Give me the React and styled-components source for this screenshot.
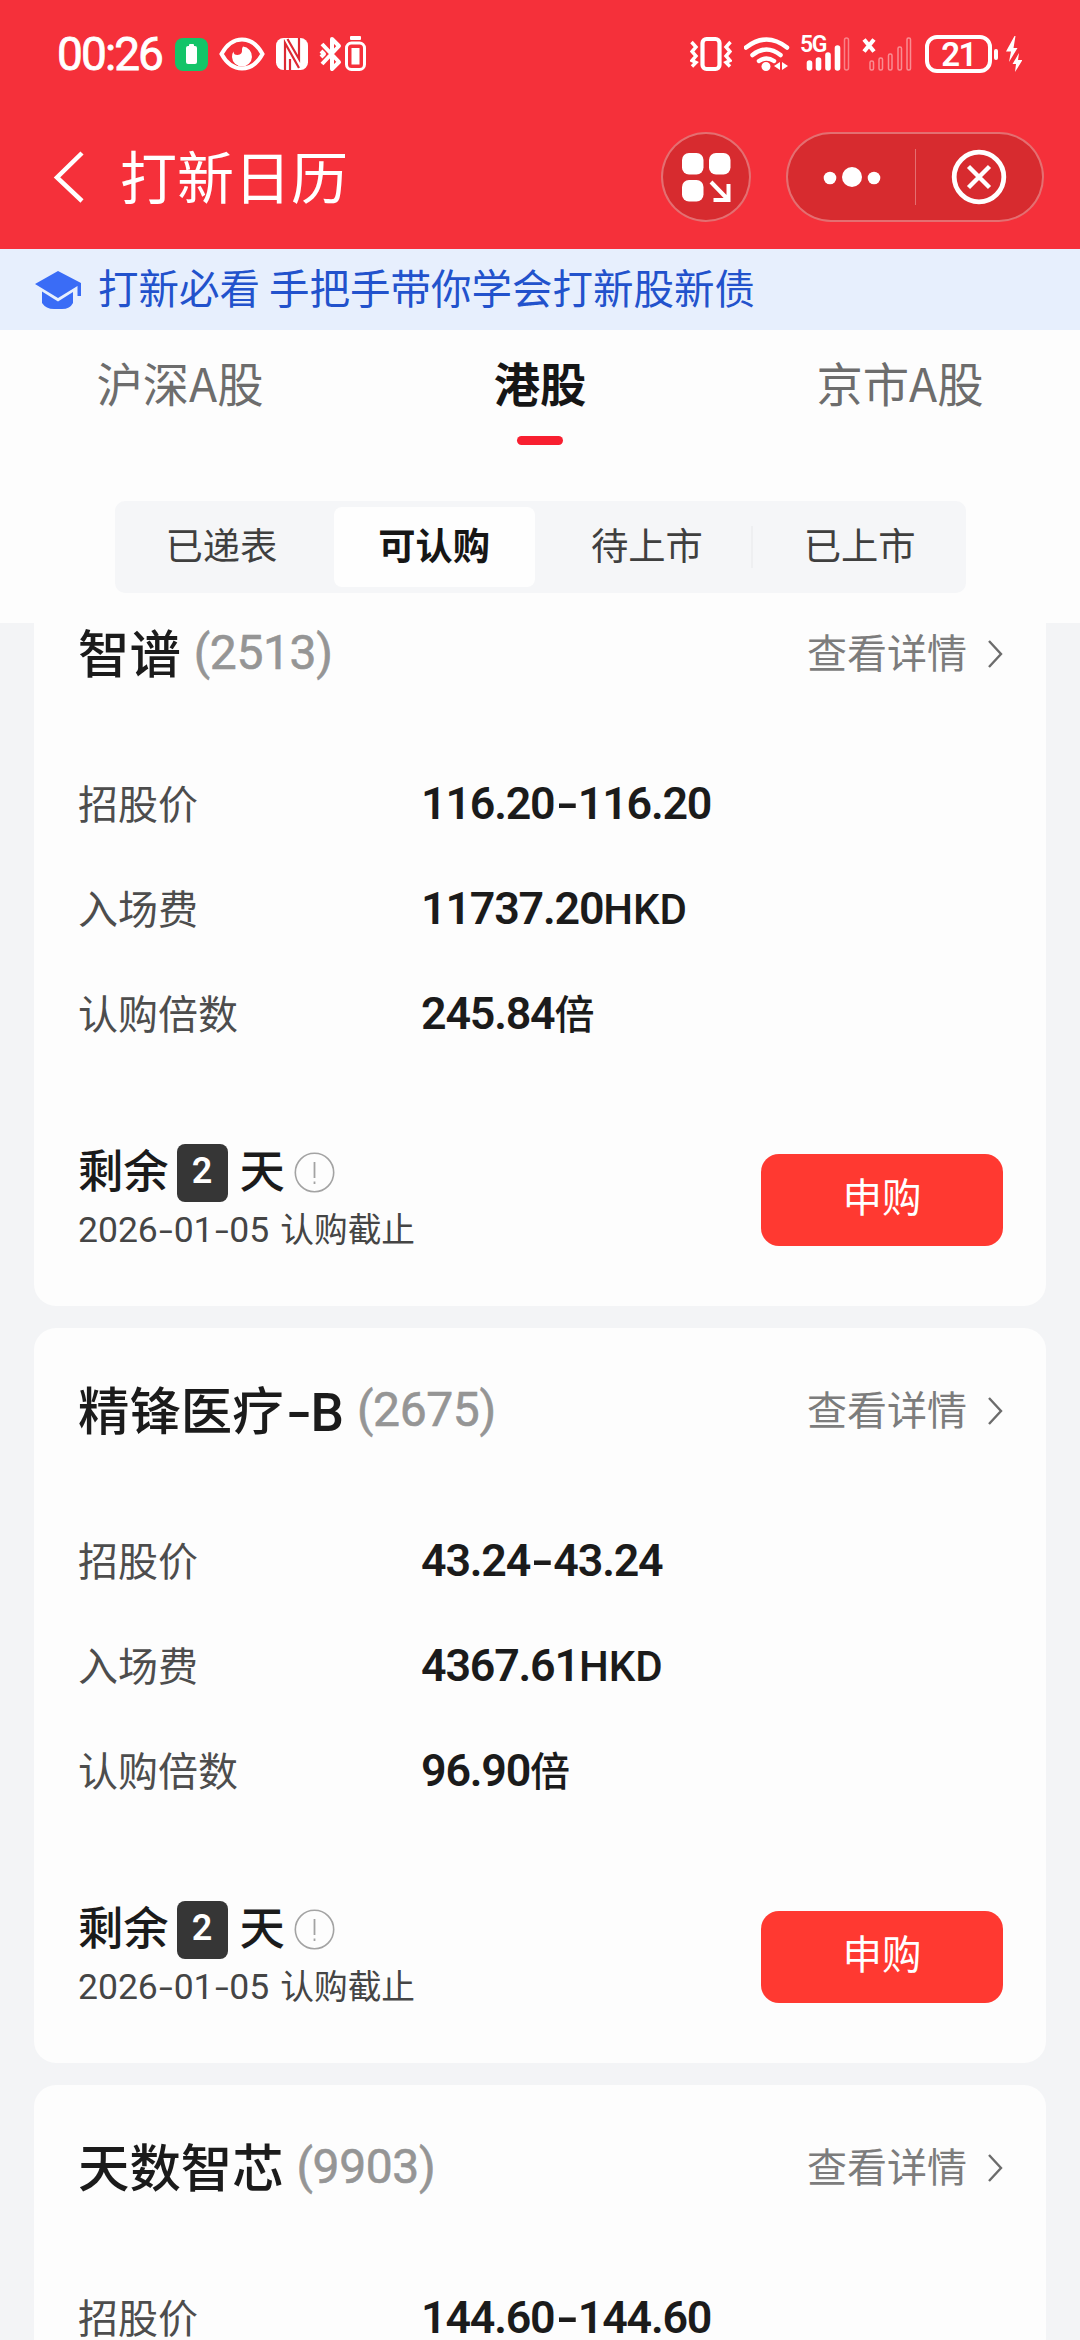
import React from 'react'
import styled, { createGlobalStyle } from 'styled-components'

const GlobalStyle = createGlobalStyle`
* { box-sizing: border-box; }
body {
    margin: 0;
    background: #f3f4f6;
    font-family: 'Noto Sans CJK SC', 'Noto Sans', sans-serif;
    color: #1b1b1b;
}
`

const Page = styled.div`
width: 1080px;
height: 2340px;
overflow: hidden;
background: #f3f4f6;
`

/* ---------- header ---------- */

const Header = styled.header`
height: 249px;
background: #f5303a;
color: #fff;
`

const StatusBar = styled.div`
height: 108px;
display: flex;
align-items: center;
padding: 0 58px 0 57px;
`

const Clock = styled.span`
width: 118px;
font: 400 46px/60px Roboto, sans-serif;
letter-spacing: -1.9px;
-webkit-text-stroke: 0.8px #fff;
`

const StatusIcon = styled.svg`
flex: none;
display: block;
margin-left: ${p => p.$gap || 0}px;
`

const Spacer = styled.div`
flex: 1;
`

const Signal = styled.div`
position: relative;
width: 52px;
height: 36px;
margin-left: ${p => p.$gap}px;
`

const SignalLabel = styled.span`
position: absolute;
left: 0;
top: -4px;
font: 600 23px/26px Roboto, sans-serif;
letter-spacing: -1.5px;
`

const Battery = styled.div`
width: 67px;
height: 38px;
margin-left: 12px;
border: 4px solid #fff;
border-radius: 12px;
font: 600 33px/31px Roboto, sans-serif;
letter-spacing: -1.5px;
text-align: center;
`

const BatteryTip = styled.div`
width: 4px;
height: 11px;
margin-left: 2px;
border-radius: 2px;
background: #fff;
`

const NavBar = styled.div`
height: 141px;
display: flex;
align-items: flex-start;
padding: 24px 36px 0 53px;
`

const BackIcon = styled.svg`
margin-top: 18px;
`

const NavTitle = styled.h1`
flex: 1;
margin: 0 0 0 34px;
font-size: 57px;
font-weight: 400;
line-height: 84px;
`

const RoundButton = styled.div`
width: 90px;
height: 90px;
border: 2px solid rgba(255, 255, 255, 0.32);
border-radius: 45px;
background: #d72b2f;
display: flex;
align-items: center;
justify-content: center;
`

const Capsule = styled(RoundButton)`
width: 258px;
margin-left: 35px;
justify-content: flex-start;
`

const CapsuleHalf = styled.div`
width: ${p => p.$width}px;
display: flex;
justify-content: center;
`

const CapsuleLine = styled.div`
width: 1px;
height: 56px;
background: rgba(255, 255, 255, 0.32);
`

/* ---------- notice ---------- */

const Notice = styled.div`
height: 81px;
display: flex;
align-items: center;
padding-left: 34px;
background: #e7effd;
color: #2252cc;
font-size: 40.5px;
line-height: 76px;
`

const NoticeText = styled.span`
margin: -6px 0 0 16px;
`

/* ---------- tabs ---------- */

const TabPanel = styled.div`
position: relative;
z-index: 1;
height: 293px;
background: #fdfdfd;
`

const Tabs = styled.div`
display: grid;
grid-template-columns: repeat(3, 1fr);
`

const Tab = styled.div`
display: flex;
flex-direction: column;
align-items: center;
font-size: 46.3px;
font-weight: ${p => (p.$active ? 700 : 400)};
line-height: 70px;
padding-top: 17px;
color: ${p => (p.$active ? '#161616' : '#6d6d6d')};
`

const TabLine = styled.div`
width: 46px;
height: 9px;
margin-top: 19px;
border-radius: 5px;
background: #f81f30;
`

const Segments = styled.div`
width: 851px;
height: 92px;
margin: 56px auto 0 115px;
padding: 6px 0;
display: grid;
grid-template-columns: repeat(4, 1fr);
border-radius: 10px;
background: #f5f6f8;
`

const Segment = styled.div`
margin: 0 ${p => (p.$active ? 6 : 0)}px;
border-radius: 8px;
text-align: center;
font-size: 37.3px;
line-height: 75px;
font-weight: ${p => (p.$active ? 700 : 400)};
color: ${p => (p.$active ? '#161616' : '#3f3f3f')};
background: ${p => (p.$active ? '#fefefe' : 'transparent')};
${p => p.$divider && `
background: linear-gradient(#eeeff1, #eeeff1) right center / 2px 42px no-repeat;
`}
`

/* ---------- stock cards ---------- */

const List = styled.div`
display: flex;
flex-direction: column;
gap: 22px;
margin: -52px 34px 0 34px;
`

const Card = styled.section`
flex: none;
height: 735px;
padding: 50px 43px 0 44px;
border-radius: 22px;
background: #fdfdfd;
`

const CardHead = styled.div`
height: 60px;
display: flex;
align-items: flex-start;
line-height: 60px;
`

const StockName = styled.h2`
margin: 0;
font-size: 51.4px;
font-weight: 500;
line-height: 60px;
`

const StockSuffix = styled.span`
margin: 5px 0 0 3px;
font: 500 53px/60px Roboto, sans-serif;
`

const StockCode = styled.span`
flex: 1;
margin: 2px 0 0 13px;
font: 400 48px/60px Roboto, sans-serif;
letter-spacing: -0.4px;
color: #959595;
-webkit-text-stroke: 0.6px #959595;
`

const Detail = styled.div`
display: flex;
align-items: center;
font-size: 40px;
line-height: 60px;
color: #7c7c7c;
`

const Chevron = styled.svg`
margin: 5px 0 0 20px;
`

const Fields = styled.dl`
margin: 69px 0 0;
`

const Field = styled.div`
height: 105px;
display: grid;
grid-template-columns: 343px 1fr;
align-items: baseline;
line-height: 105px;
`

const FieldName = styled.dt`
font-size: 40px;
color: #4d4d4d;
`

const FieldValue = styled.dd`
margin: 0;
font: 600 44.8px/105px Roboto, sans-serif;
letter-spacing: -1.2px;
`

const Dash = styled.span`
display: inline-block;
margin: 0 ${p => p.$space}px;
transform: scaleX(1.4);
`

const Unit = styled.span`
font: 500 ${p => p.$size || 40}px/1 Roboto, 'Noto Sans CJK SC', sans-serif;
letter-spacing: 0;
`

const CardFoot = styled.div`
display: flex;
justify-content: space-between;
margin-top: 79px;
`

const Remain = styled.div`
height: 58px;
display: flex;
align-items: center;
font-size: 45.3px;
font-weight: 500;
`

const RemainText = styled.span`
margin-top: -10px;
line-height: 58px;
`

const DayBox = styled.span`
width: 51px;
height: 58px;
margin: 0 12px 0 8px;
border-radius: 8px;
background: #363636;
color: #fff;
font: 600 36px/54px Roboto, sans-serif;
text-align: center;
`

const InfoIcon = styled.svg`
margin: -2px 0 0 9px;
`

const Deadline = styled.div`
font-size: 33.7px;
line-height: 52px;
color: #454545;
`

const DateText = styled.span`
font-family: Roboto, sans-serif;
font-size: 35.5px;
margin-right: 11px;
`

const BuyButton = styled.button`
width: 242px;
height: 92px;
margin-top: 10px;
padding: 0 0 10px;
border: 0;
border-radius: 18px;
background: #ff3931;
color: #fff;
font: 400 39.5px/80px 'Noto Sans CJK SC', sans-serif;
`

const stocks = [
    { name: '智谱', code: '2513', price: '116.20-116.20', fee: '11737.20', times: '245.84' },
    { name: '精锋医疗', suffix: '-B', code: '2675', price: '43.24-43.24', fee: '4367.61', times: '96.90' },
    { name: '天数智芯', code: '9903', price: '144.60-144.60', fee: '', times: '' },
]

// hyphens are stretched, the number font has a short one
const Dashed = ({ text, space }) =>
    text.split('-').map((part, i) => (
        <React.Fragment key={i}>
            {i > 0 && <Dash $space={space}>-</Dash>}
            {part}
        </React.Fragment>
    ))

const StatusIcons = () => (
    <StatusBar>
        <Clock>00:26</Clock>
        <StatusIcon width="33" height="33" viewBox="0 0 33 33">
            <rect width="33" height="33" rx="8" fill="#13c468" />
            <rect x="14" y="6" width="5" height="4" rx="1" fill="#fff" />
            <rect x="11" y="8" width="11" height="18" rx="2" fill="#fff" />
        </StatusIcon>
        <StatusIcon $gap={11} width="46" height="34" viewBox="0 0 46 34">
            <path d="M2.5 17C8 7 15 2.500 23 2.500S38 7 43.500 17C38 27 31 31.500 23 31.500S8 27 2.500 17Z" fill="none" stroke="#fff" strokeWidth="4" />
            <path d="M24 9.500a10 10 0 1 1-11 10.500q0-3.500 1.500-5.500 0 3.500 4 3.500 5-.5 4.500-5-.2-2 1-3.500Z" fill="#fff" />
        </StatusIcon>
        <StatusIcon $gap={11} width="32" height="32" viewBox="0 0 32 32">
            <rect width="32" height="32" rx="7.500" fill="#fff" />
            <path d="M9 32V5l14 25M11.500 1l11.500 20V0M14 32v-11" fill="none" stroke="#dd2932" strokeWidth="2.200" />
        </StatusIcon>
        <StatusIcon $gap={11} width="48" height="36" viewBox="0 0 48 36">
            <path d="M3 8l17 18-7 7V3l7 7L3 28M2 15l3 3-3 3" fill="none" stroke="#fff" strokeWidth="4" strokeLinejoin="round" />
            <rect x="27.500" y="7" width="18" height="26.500" rx="5" fill="none" stroke="#fff" strokeWidth="3" />
            <rect x="31" y="0" width="11" height="4" rx="1" fill="#fff" />
            <rect x="32.500" y="12" width="8" height="16.500" fill="#fff" />
        </StatusIcon>
        <Spacer />
        <StatusIcon width="42" height="36" viewBox="0 0 42 36">
            <rect x="12.500" y="3" width="17" height="30" rx="4" fill="none" stroke="#fff" strokeWidth="4.200" />
            <path d="M1.500 6l4.500 5-4 4.500 4 4.500-4 4.500 4 2-4 4M40.500 6l-4.500 5 4 4.500-4 4.500 4 4.500-4 2 4 4" fill="none" stroke="#fff" strokeWidth="3.400" />
        </StatusIcon>
        <StatusIcon $gap={12} width="46" height="36" viewBox="0 0 46 36">
            <path d="M2 11.500q20.500-16 41 0M8.500 19q14-11 28 0M15 25q7.500-5 15 0" fill="none" stroke="#fff" strokeWidth="4.500" strokeLinecap="round" />
            <circle cx="22" cy="30.500" r="4.500" fill="#fff" />
            <path d="M36 26v8l-6-4ZM38 26v8l6-4Z" fill="#fff" />
        </StatusIcon>
        <Signal $gap={10}>
            <SignalLabel>5G</SignalLabel>
            <svg width="52" height="36" viewBox="0 0 52 36">
                <path d="M9.500 27v5M18.500 24v8M28 19v13M37.500 12v20" stroke="#fff" strokeWidth="5.600" strokeLinecap="round" />
                <rect x="44.500" y="2" width="4" height="32" rx="2" fill="none" stroke="#fff" strokeOpacity="0.4" strokeWidth="1.500" />
            </svg>
        </Signal>
        <Signal $gap={9}>
            <svg width="52" height="36" viewBox="0 0 52 36">
                <path d="M3 3.500l10 12M13 3.500l-10 12" stroke="#fff" strokeWidth="4.200" />
                <g fill="none" stroke="#fff" strokeOpacity="0.45" strokeWidth="1.500">
                    <rect x="9" y="25" width="3.500" height="9" rx="1.500" />
                    <rect x="18" y="22" width="3.500" height="12" rx="1.500" />
                    <rect x="27.500" y="18" width="3.500" height="16" rx="1.500" />
                    <rect x="37" y="11" width="3.500" height="23" rx="1.500" />
                    <rect x="46" y="2" width="3.500" height="32" rx="1.500" />
                </g>
            </svg>
        </Signal>
        <Battery>21</Battery>
        <BatteryTip />
        <StatusIcon $gap={8} width="16" height="36" viewBox="0 0 16 36">
            <path d="M8.500 0L0 15.500h5L3 26 11.500 12H7.500L9.500 0ZM13 17l-6.500 11h3.500l-1 8 7.500-12h-4.500Z" fill="#fff" />
        </StatusIcon>
    </StatusBar>
)

const Nav = () => (
    <NavBar>
        <BackIcon width="33" height="54" viewBox="0 0 33 54">
            <path d="M29 3L4 27.500 29 51" fill="none" stroke="#fff" strokeWidth="4.500" />
        </BackIcon>
        <NavTitle>打新日历</NavTitle>
        <RoundButton>
            <svg width="50" height="50" viewBox="0 0 50 50" fill="#fff">
                <rect x="1" y="1" width="21.500" height="21.500" rx="7" />
                <rect x="28" y="1" width="21.500" height="21.500" rx="7" />
                <rect x="1" y="28" width="21.500" height="21.500" rx="7" />
                <path d="M30 30l17 17.500M47.500 32v16H32.500" fill="none" stroke="#fff" strokeWidth="4" />
            </svg>
        </RoundButton>
        <Capsule>
            <CapsuleHalf $width={127}>
                <svg width="58" height="22" viewBox="0 0 58 22" fill="#fff">
                    <circle cx="7" cy="12" r="6.300" />
                    <circle cx="29" cy="11" r="10" />
                    <circle cx="51" cy="12" r="6.300" />
                </svg>
            </CapsuleHalf>
            <CapsuleLine />
            <CapsuleHalf $width={126}>
                <svg width="56" height="56" viewBox="0 0 56 56" fill="none" stroke="#fff">
                    <circle cx="28" cy="28" r="24.800" strokeWidth="4.800" />
                    <path d="M17.500 17.500l21 21M38.500 17.500l-21 21" strokeWidth="4.400" />
                </svg>
            </CapsuleHalf>
        </Capsule>
    </NavBar>
)

const StockCard = ({ stock }) => (
    <Card>
        <CardHead>
            <StockName>{stock.name}</StockName>
            {stock.suffix && <StockSuffix><Dashed text={stock.suffix} space={3} /></StockSuffix>}
            <StockCode>({stock.code})</StockCode>
            <Detail>
                查看详情
                <Chevron width="16" height="30" viewBox="0 0 16 30">
                    <path d="M2 2l12 13L2 28" fill="none" stroke="#6c6c6c" strokeWidth="2.400" />
                </Chevron>
            </Detail>
        </CardHead>
        <Fields>
            <Field>
                <FieldName>招股价</FieldName>
                <FieldValue><Dashed text={stock.price} space={4} /></FieldValue>
            </Field>
            {stock.fee && (
                <Field>
                    <FieldName>入场费</FieldName>
                    <FieldValue>{stock.fee}<Unit $size={42}>HKD</Unit></FieldValue>
                </Field>
            )}
            {stock.times && (
                <Field>
                    <FieldName>认购倍数</FieldName>
                    <FieldValue>{stock.times}<Unit>倍</Unit></FieldValue>
                </Field>
            )}
        </Fields>
        {stock.times && (
            <CardFoot>
                <div>
                    <Remain>
                        <RemainText>剩余</RemainText>
                        <DayBox>2</DayBox>
                        <RemainText>天</RemainText>
                        <InfoIcon width="41" height="41" viewBox="0 0 41 41" fill="none" stroke="#a3a3a3">
                            <circle cx="20.500" cy="20.500" r="19.200" strokeWidth="1.600" />
                            <path d="M20.500 10v16M20.500 29.500v2.500" strokeWidth="1.800" />
                        </InfoIcon>
                    </Remain>
                    <Deadline>
                        <DateText><Dashed text="2026-01-05" space={3} /></DateText>
                        认购截止
                    </Deadline>
                </div>
                <BuyButton>申购</BuyButton>
            </CardFoot>
        )}
    </Card>
)

const App = () => (
    <Page>
        <GlobalStyle />
        <Header>
            <StatusIcons />
            <Nav />
        </Header>
        <Notice>
            <svg width="48" height="40" viewBox="0 0 48 40" fill="#3a6cf6">
                <path d="M24 1L47 13v13h-3.500V16L24 28 1 14Z" />
                <path d="M8 21.500L24 31.500 39 22v11q-3 6-11 6h-8q-8 0-12-6Z" />
            </svg>
            <NoticeText>打新必看 手把手带你学会打新股新债</NoticeText>
        </Notice>
        <TabPanel>
            <Tabs>
                <Tab>沪深A股</Tab>
                <Tab $active>
                    港股
                    <TabLine />
                </Tab>
                <Tab>京市A股</Tab>
            </Tabs>
            <Segments>
                <Segment>已递表</Segment>
                <Segment $active>可认购</Segment>
                <Segment $divider>待上市</Segment>
                <Segment>已上市</Segment>
            </Segments>
        </TabPanel>
        <List>
            {stocks.map(stock => <StockCard key={stock.code} stock={stock} />)}
        </List>
    </Page>
)

export default App
